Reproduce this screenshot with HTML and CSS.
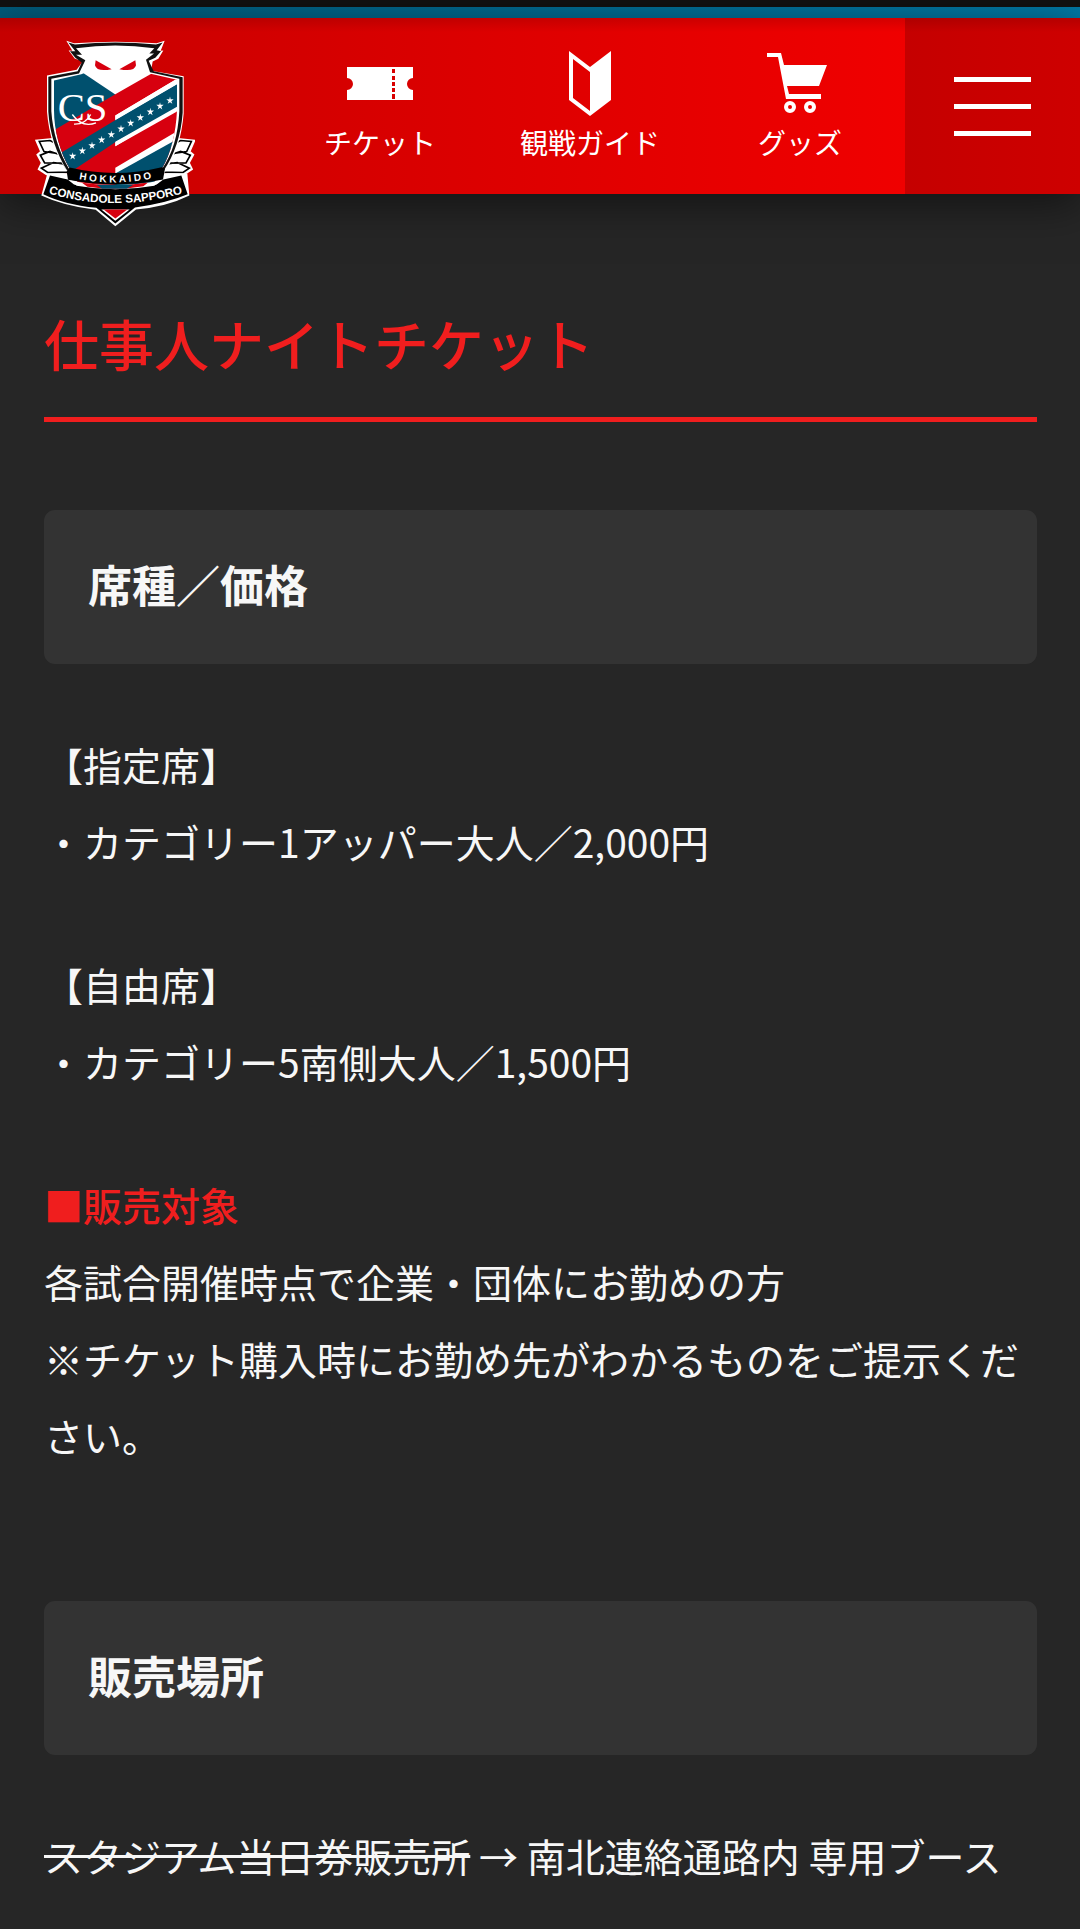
FILE: index.html
```html
<!DOCTYPE html>
<html lang="ja">
<head>
    <meta charset="UTF-8">
    <meta name="viewport" content="width=device-width, initial-scale=1">
    <title>仕事人ナイトチケット</title>
    <link rel="stylesheet" href="styles.css">
</head>
<body>
    <div class="top-bar"></div>
    <header class="header">
        <a class="logo" href="#" aria-label="HOKKAIDO CONSADOLE SAPPORO">
            <svg viewBox="105 120 480 560" width="160" height="187">
                <defs>
                    <clipPath id="shield">
                        <path d="M162 241L244 222L345 180L452 221L531 239V330C528 400 512 460 486 505C450 580 400 615 346 657C285 610 235 560 209 505C180 455 162 390 162 330Z"/>
                    </clipPath>
                    <path id="hokkaido" d="M220 534Q346 561 472 531"/>
                    <path id="consadole" d="M138 578Q346 640 556 577"/>
                    <path id="star" d="M0-12L2-4H11L4 2L7 10L0 5L-7 10L-4 2L-11-4H-2Z"/>
                </defs>
                <!-- wings -->
                <g fill="#fff" stroke="#fff" stroke-width="10">
                    <path d="M166 418L112 423L126 455L115 464L128 488L119 506L140 520L210 515Z"/>
                    <path d="M526 418L580 423L566 455L577 464L564 488L573 506L552 520L482 515Z"/>
                </g>
                <g fill="#fff" stroke="#000" stroke-width="5">
                    <path d="M168 430L150 421L118 424L132 454L178 461ZM178 463L150 454L121 465L134 488L190 489ZM190 491L160 487L124 504L143 517L208 516Z"/>
                    <path d="M524 430L542 421L574 424L560 454L514 461ZM514 463L542 454L571 465L558 488L502 489ZM502 491L532 487L568 504L549 517L484 516Z"/>
                </g>
                <!-- shield and owl head outline -->
                <path d="M199 122L222 129Q346 120 470 129L494 122L482 152L490 151L475 176L458 184L453 212L551 228V340C546 405 528 468 492 520L562 520L568 586Q500 620 408 628L346 678L287 629Q190 617 124 586L142 520H207C166 470 146 400 141 335V226L230 209L248 184L224 175L206 151L217 152Z" fill="#fff"/>
                <path d="M205 127L225 133Q346 121 468 133L488 127L470 150L483 153L466 173L446 182L461 213L548 231V338C543 405 524 463 491 512H202C169 460 149 400 145 335V230L233 213L245 187L226 173L210 153L226 153Z" fill="#111"/>
                <path d="M228 144Q346 128 463 144L448 160L462 160L438 179L450 216L538 236V333C534 405 518 460 485 508H208C177 455 158 395 154 333V236L237 220L256 180L228 164L246 164Z" fill="#fff"/>
                <g clip-path="url(#shield)">
                    <path d="M155 215H244L346 283L346 680H155Z" fill="#00506e"/>
                    <path d="M155 394L346 282L455 220L540 230V660H155Z" fill="#d7000f"/>
                    <path d="M346 346L540 230V320L346 438Z" fill="#fff"/>
                    <path d="M155 475L348 359L540 247V320L348 425L205 520H155Z" fill="#00506e"/>
                    <path d="M346 503L540 388V425L346 536Z" fill="#fff"/>
                    <path d="M346 520L540 412V560H346Z" fill="#00506e"/>
                    <path d="M346 346L540 230V246L346 359ZM346 425L540 315V329L346 438Z" fill="#fff"/>
                </g>
                <!-- eyes -->
                <path d="M287 180L335 207Q290 216 285 195ZM406 180L358 207Q403 216 408 195Z" fill="#d7000f"/>
                <g fill="#fff">
                    <use href="#star" x="218" y="468"/>
                    <use href="#star" x="247" y="452"/>
                    <use href="#star" x="276" y="436"/>
                    <use href="#star" x="305" y="419"/>
                    <use href="#star" x="334" y="403"/>
                    <use href="#star" x="363" y="386"/>
                    <use href="#star" x="392" y="369"/>
                    <use href="#star" x="421" y="352"/>
                    <use href="#star" x="451" y="335"/>
                    <use href="#star" x="480" y="318"/>
                    <use href="#star" x="510" y="301"/>
                </g>
                <!-- monogram -->
                <text class="monogram" x="173" y="364">CS</text>
                <path d="M217 343C234 367 255 381 288 368M272 343C263 360 247 373 222 372" fill="none" stroke="#fff" stroke-width="4"/>
                <!-- ribbons -->
                <path d="M209 502Q346 535 485 501L495 505L489 538Q346 567 204 539L200 514Z" fill="#000"/>
                <path d="M150 526L203 538L222 553Q346 578 470 553L490 538L544 526L563 582Q505 607 405 622L346 670L289 623Q190 612 130 582Z" fill="#000"/>
                <path d="M210 541Q346 568 482 541L463 557Q346 578 230 557Z" fill="#fff"/>
                <path d="M246 548Q346 563 444 547L430 558Q346 573 262 560Z" fill="#d7000f"/>
                <path d="M290 554H400L380 566H306Z" fill="#00506e"/>
                <path d="M304 628H389L346 662Z" fill="#fff"/>
                <path d="M311 628H382L346 655Z" fill="#d7000f"/>
                <text class="ribbon-small"><textPath href="#hokkaido" startOffset="50%">H O K K A I D O</textPath></text>
                <text class="ribbon-large"><textPath href="#consadole" startOffset="50%">CONSADOLE SAPPORO</textPath></text>
            </svg>
        </a>
        <nav class="nav">
            <a class="nav-item" href="#">
                <svg viewBox="0 0 66 66" width="66" height="66" fill="#fff">
                    <path fill-rule="evenodd" d="M0 17H66V28A6 6 0 0 0 66 40V50H0V40A6 6 0 0 0 0 28ZM45 19V23H48V19ZM45 26V30H48V26ZM45 32V36H48V32ZM45 38V42H48V38ZM45 44V49H48V44Z"/>
                </svg>
                <span>チケット</span>
            </a>
            <a class="nav-item" href="#">
                <svg viewBox="0 0 66 66" width="66" height="66" fill="#fff">
                    <path fill-rule="evenodd" d="M12 1L33 17L54 1V50L33 66L12 50ZM16 9V48L33 61V22Z"/>
                </svg>
                <span>観戦ガイド</span>
            </a>
            <a class="nav-item" href="#">
                <svg viewBox="0 0 66 66" width="66" height="66" fill="#fff">
                    <path d="M0 3H14L17 15H60L52 36H20L22 44H54V49H19L11 7H0Z"/>
                    <circle cx="23" cy="57" r="4" fill="none" stroke="#fff" stroke-width="4"/>
                    <circle cx="43" cy="57" r="4" fill="none" stroke="#fff" stroke-width="4"/>
                </svg>
                <span>グッズ</span>
            </a>
        </nav>
        <button class="menu-btn" type="button" aria-label="メニュー">
            <span></span>
            <span></span>
            <span></span>
        </button>
    </header>

    <main class="content">
        <h1 class="page-title">仕事人ナイトチケット</h1>

        <section class="section">
            <h2 class="section-title">席種／価格</h2>
            <div class="section-body">
                <p>【指定席】<br>・カテゴリー1アッパー大人／2,000円</p>
                <p>【自由席】<br>・カテゴリー5南側大人／1,500円</p>
                <p><strong class="notice">■販売対象</strong><br>各試合開催時点で企業・団体にお勤めの方<br>※チケット購入時にお勤め先がわかるものをご提示ください。</p>
            </div>
        </section>

        <section class="section">
            <h2 class="section-title">販売場所</h2>
            <div class="section-body">
                <p><s>スタジアム当日券販売所</s> → 南北連絡通路内 専用ブース</p>
            </div>
        </section>
    </main>
</body>
</html>
```

FILE: styles.css
```css
* {
    box-sizing: border-box;
}
body {
    margin: 0;
    background-color: #262626;
    color: #f7f7f7;
    font-family: "Noto Sans CJK JP", sans-serif;
}
.top-bar {
    height: 18px;
    border-top: 7px solid #111;
    background: linear-gradient(to right, #005a7a, #0078a4);
}
.header {
    display: flex;
    height: 176px;
    padding-left: 35px;
    background: linear-gradient(rgba(0,0,0,0.12), transparent 14px), linear-gradient(to right, #c60000, #f00000 84%);
    box-shadow: 0 10px 40px rgba(0,0,0,0.5);
}
.logo {
    align-self: flex-start;
    margin-top: 22px;
}
.logo svg, .nav-item svg {
    display: block;
}
.monogram {
    font-family: "Liberation Serif", serif;
    font-size: 122px;
    fill: #fff;
}
.ribbon-small, .ribbon-large {
    font-family: "Liberation Sans", sans-serif;
    font-weight: bold;
    text-anchor: middle;
    fill: #fff;
}
.ribbon-small {
    font-size: 30px;
}
.ribbon-large {
    font-size: 35px;
}
.nav {
    display: flex;
    flex: 1;
    margin-left: 80px;
}
.nav-item {
    flex: 1;
    display: flex;
    flex-direction: column;
    align-items: center;
    padding-top: 32px;
    color: #fff;
    font-size: 28px;
    line-height: 40px;
    text-decoration: none;
    white-space: nowrap;
}
.nav-item span {
    margin-top: 6px;
}
.menu-btn {
    display: flex;
    flex-direction: column;
    align-items: center;
    justify-content: center;
    gap: 22px;
    width: 175px;
    padding: 0;
    border: none;
    background: linear-gradient(rgba(0,0,0,0.12), transparent 14px), linear-gradient(to right, #c50000, #ce0000);
    cursor: pointer;
}
.menu-btn span {
    width: 77px;
    height: 5px;
    background-color: #fff;
}
.content {
    padding: 107px 43px 0 44px;
}
.page-title {
    margin: 0 0 88px;
    padding-bottom: 33px;
    border-bottom: 5px solid #f01e1e;
    color: #f01e1e;
    font-size: 55px;
    font-weight: 500;
    line-height: 83px;
}
.section {
    margin-bottom: 127px;
}
.section-title {
    margin: 0 0 62px;
    padding: 41px 44px 47px;
    border-radius: 11px;
    background-color: #333;
    font-size: 44px;
    font-weight: bold;
    line-height: 66px;
}
.section-body {
    font-size: 39px;
    line-height: 77px;
}
.section-body p {
    margin: 0 0 66px;
}
.section-body p:last-child {
    margin-bottom: 0;
}
.notice {
    color: #f01e1e;
    font-weight: 500;
}
```
